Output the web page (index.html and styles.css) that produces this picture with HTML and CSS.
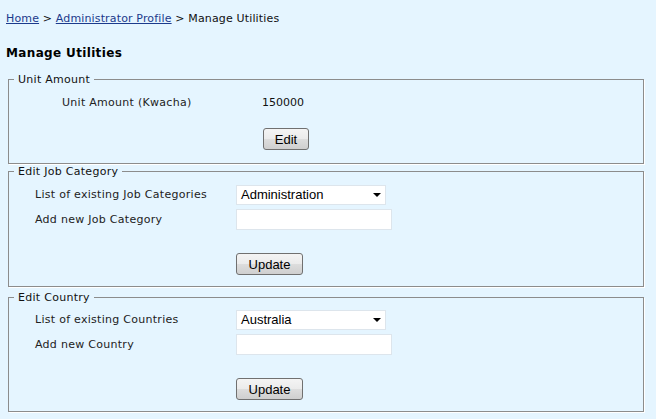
FILE: index.html
```html
<!DOCTYPE html>
<html>
<head>
<meta charset="utf-8">
<title>Manage Utilities</title>
<link rel="stylesheet" href="styles.css">
</head>
<body>
<div class="page">
  <div class="crumbs"><a href="#">Home</a> &gt; <a href="#">Administrator Profile</a> &gt; Manage Utilities</div>
  <h1 class="title">Manage Utilities</h1>

  <fieldset class="box box-unit">
    <legend>Unit Amount</legend>
    <div class="form form-unit">
      <span class="label">Unit Amount (Kwacha)</span>
      <span class="value">150000</span>
      <span class="spacer"></span>
      <div class="actions"><button class="btn btn-edit" type="button">Edit</button></div>
    </div>
  </fieldset>

  <fieldset class="box">
    <legend>Edit Job Category</legend>
    <div class="form">
      <span class="label">List of existing Job Categories</span>
      <span class="select">Administration</span>
      <span class="label">Add new Job Category</span>
      <input class="text" type="text">
      <span class="spacer"></span>
      <div class="actions"><button class="btn btn-update" type="button">Update</button></div>
    </div>
  </fieldset>

  <fieldset class="box box-last">
    <legend>Edit Country</legend>
    <div class="form">
      <span class="label">List of existing Countries</span>
      <span class="select">Australia</span>
      <span class="label">Add new Country</span>
      <input class="text" type="text">
      <span class="spacer"></span>
      <div class="actions"><button class="btn btn-update" type="button">Update</button></div>
    </div>
  </fieldset>
</div>
</body>
</html>
```

FILE: styles.css
```css
html, body {
  margin: 0;
  padding: 0;
  background: #e5f5ff;
}

body {
  font-family: "DejaVu Sans", Verdana, sans-serif;
  font-size: 11px;
  color: #000;
}

.page {
  padding: 12px 10px 0 6px;
}

.crumbs {
  line-height: 13px;
  color: #111;
  letter-spacing: 0.15px;
}

.crumbs a {
  color: #1c3a8c;
  text-decoration: underline;
}

.title {
  font-size: 12px;
  font-weight: bold;
  line-height: 15px;
  letter-spacing: 0.35px;
  margin: 21px 0 12px;
}

.box {
  margin: 0 2px 1px;
  padding: 7px 5px 11px;
  border: 1px solid #8c8c8c;
  box-shadow: 1px 1px 0 #fff;
  min-width: 0;
}

.box-unit {
  padding-top: 6px;
  padding-bottom: 13px;
}

.box-last {
  margin-top: 4px;
  padding-top: 6px;
}

.box legend {
  padding: 0 4px;
  line-height: 13px;
  color: #111;
  letter-spacing: 0.28px;
}

.form {
  display: grid;
  grid-template-columns: 201px auto;
  justify-content: start;
  align-items: center;
  row-gap: 4px;
  padding-left: 21px;
}

.form-unit {
  grid-template-columns: 200px auto;
  padding-left: 48px;
  row-gap: 0;
}

.label {
  color: #222;
  line-height: 16px;
  letter-spacing: 0.28px;
}

.value {
  line-height: 16px;
  color: #111;
}

.form-unit .value {
  padding: 3px 0;
}

.spacer {
  display: block;
}

.actions {
  margin-top: 19px;
}

.form-unit .actions {
  margin-top: 14px;
  padding-left: 1px;
}

.select {
  position: relative;
  box-sizing: border-box;
  display: block;
  width: 150px;
  height: 20px;
  padding: 0 0 0 4px;
  background: #fff;
  border: 1px solid #dde5ec;
  font-family: "Liberation Sans", Arial, sans-serif;
  font-size: 13px;
  line-height: 18px;
  color: #000;
}

.select::after {
  content: "";
  position: absolute;
  right: 4px;
  top: 7px;
  border-left: 4px solid transparent;
  border-right: 4px solid transparent;
  border-top: 4px solid #000;
}

.text {
  box-sizing: border-box;
  display: block;
  width: 156px;
  height: 21px;
  margin: 0;
  padding: 0 3px;
  background: #fff;
  border: 1px solid #dde5ec;
  font-family: "Liberation Sans", Arial, sans-serif;
  font-size: 13px;
}

.btn {
  box-sizing: border-box;
  height: 22px;
  margin: 0;
  padding: 0;
  border: 1px solid #707070;
  border-radius: 3px;
  background: linear-gradient(#f4f4f4 0%, #ebebeb 50%, #dddddd 51%, #cfcfcf 100%);
  font-family: "Liberation Sans", Arial, sans-serif;
  font-size: 13px;
  color: #000;
}

.btn-edit {
  width: 46px;
}

.btn-update {
  width: 67px;
}
```
